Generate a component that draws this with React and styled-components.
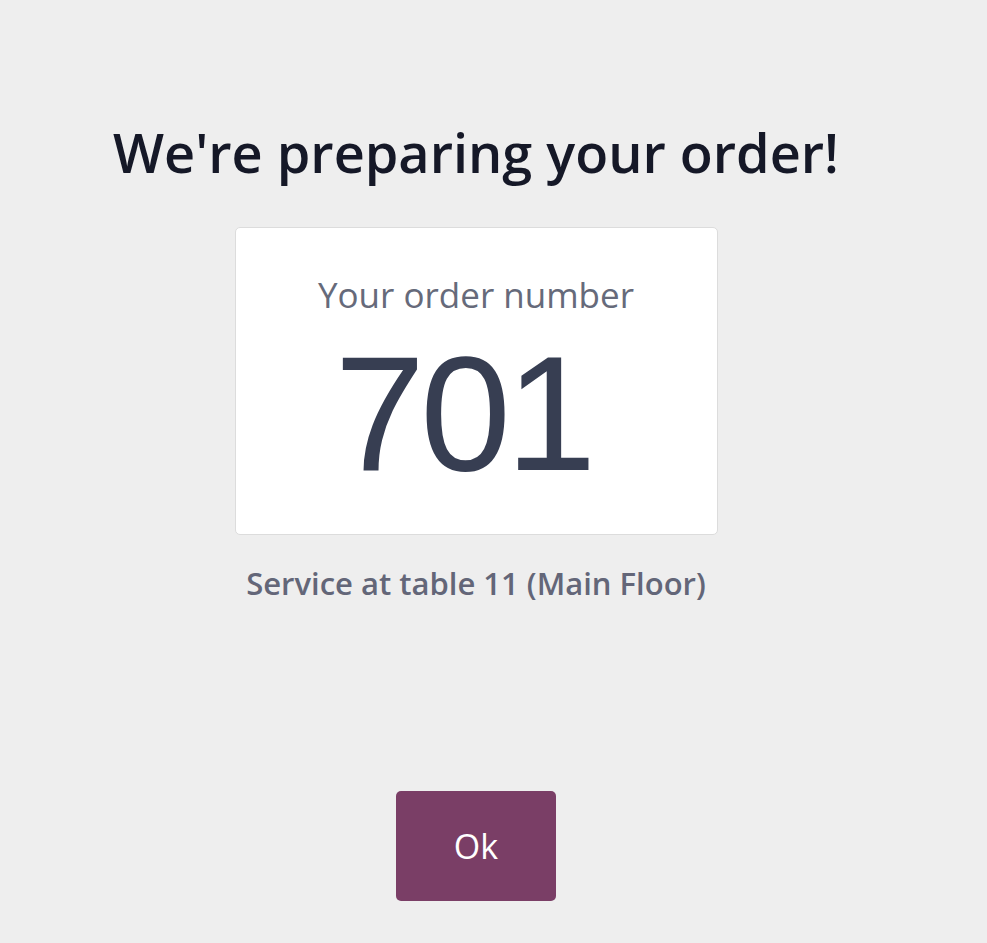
import React from "react";
import styled, { createGlobalStyle } from "styled-components";

const Global = createGlobalStyle`
  html, body { margin: 0; padding: 0; background: #eeeeee; }
  body { font-family: "Open Sans", "Noto Sans", sans-serif; }
`;

const Screen = styled.div`
  height: 943px;
  box-sizing: border-box;
  padding: 0 35px 42px 0;
  display: flex;
  flex-direction: column;
  align-items: center;
`;

const Title = styled.h1`
  margin: 112px 0 0;
  font-size: 54px;
  line-height: 80px;
  font-weight: 600;
  color: #151827;
  letter-spacing: 0;
`;

const Card = styled.div`
  margin-top: 35px;
  width: 483px;
  height: 308px;
  box-sizing: border-box;
  background: #ffffff;
  border: 1px solid #dcdcdc;
  border-radius: 5px;
  display: flex;
  flex-direction: column;
  align-items: center;
`;

const CardLabel = styled.div`
  margin-top: 45px;
  font-size: 35px;
  line-height: 44px;
  color: #666a7a;
`;

const OrderNumber = styled.div`
  font-family: "Liberation Sans", Arial, sans-serif;
  font-size: 163px;
  line-height: 1;
  letter-spacing: -5px;
  color: #373e52;
  margin: 15px 26px 0 0;
`;

const Service = styled.div`
  margin-top: 28px;
  font-size: 31px;
  line-height: 40px;
  font-weight: 600;
  color: #636678;
`;

const Spacer = styled.div`
  flex: 1;
`;

const OkButton = styled.button`
  width: 160px;
  height: 110px;
  border: none;
  border-radius: 5px;
  background: #7a3e66;
  color: #ffffff;
  font-family: inherit;
  font-size: 34px;
  cursor: pointer;
`;

export default function App() {
  return (
    <>
      <Global />
      <Screen>
        <Title>We're preparing your order!</Title>
        <Card>
          <CardLabel>Your order number</CardLabel>
          <OrderNumber>701</OrderNumber>
        </Card>
        <Service>Service at table 11 (Main Floor)</Service>
        <Spacer />
        <OkButton>Ok</OkButton>
      </Screen>
    </>
  );
}
